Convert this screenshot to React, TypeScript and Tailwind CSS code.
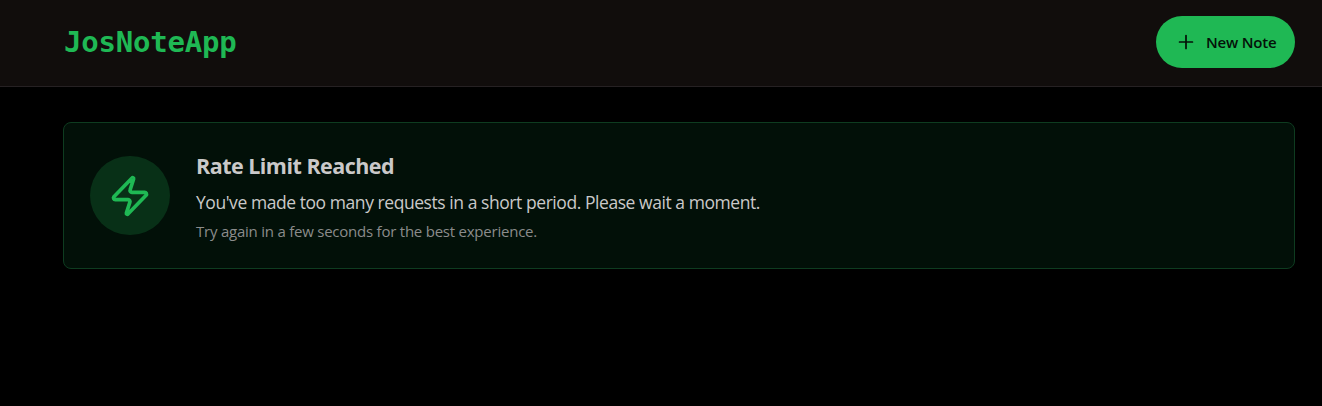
import React from "react";
import { Plus, Zap } from "lucide-react";

export default function App() {
  return (
    <div className="min-h-screen bg-black font-['Open_Sans','Noto_Sans',sans-serif]">
      <header className="h-[87px] border-b border-[#262123] bg-[#110d0c] pt-4 pr-[27px] pl-16">
        <div className="flex items-start justify-between">
          <h1 className="pt-[5px] font-['DejaVu_Sans_Mono',monospace] text-[29px] leading-[42px] font-bold tracking-[-0.2px] text-[#1fb854]">
            JosNoteApp
          </h1>
          <button className="flex h-[52px] w-[139px] items-center rounded-full bg-[#1fb854] pl-[19px] text-[15px] font-semibold tracking-[-0.18px] text-[#041108]">
            <Plus size={22} strokeWidth={1.9} />
            <span className="ml-[9px] whitespace-nowrap">New Note</span>
          </button>
        </div>
      </header>
      <main className="pt-[35px] pr-[27px] pl-[63px]">
        <section className="flex h-[147px] items-center rounded-lg border border-[#0e3c20] bg-[#021008] pl-[26px]">
          <div className="mb-px flex h-[79px] w-20 shrink-0 items-center justify-center rounded-full bg-[#083017] pt-px">
            <Zap size={44} className="text-[#1fb854]" />
          </div>
          <div className="ml-[26px] pt-0.5 whitespace-nowrap">
            <h3 className="text-[21.5px] leading-7 font-bold tracking-[-0.52px] text-[#cac9c9]">Rate Limit Reached</h3>
            <p className="mt-2 text-[17.5px] leading-7 tracking-[-0.44px] text-[#cac9c9]">
              You've made too many requests in a short period. Please wait a moment.
            </p>
            <p className="mt-1 text-[15px] leading-[22px] tracking-[-0.23px] text-[#8b8c8b]">
              Try again in a few seconds for the best experience.
            </p>
          </div>
        </section>
      </main>
    </div>
  );
}
